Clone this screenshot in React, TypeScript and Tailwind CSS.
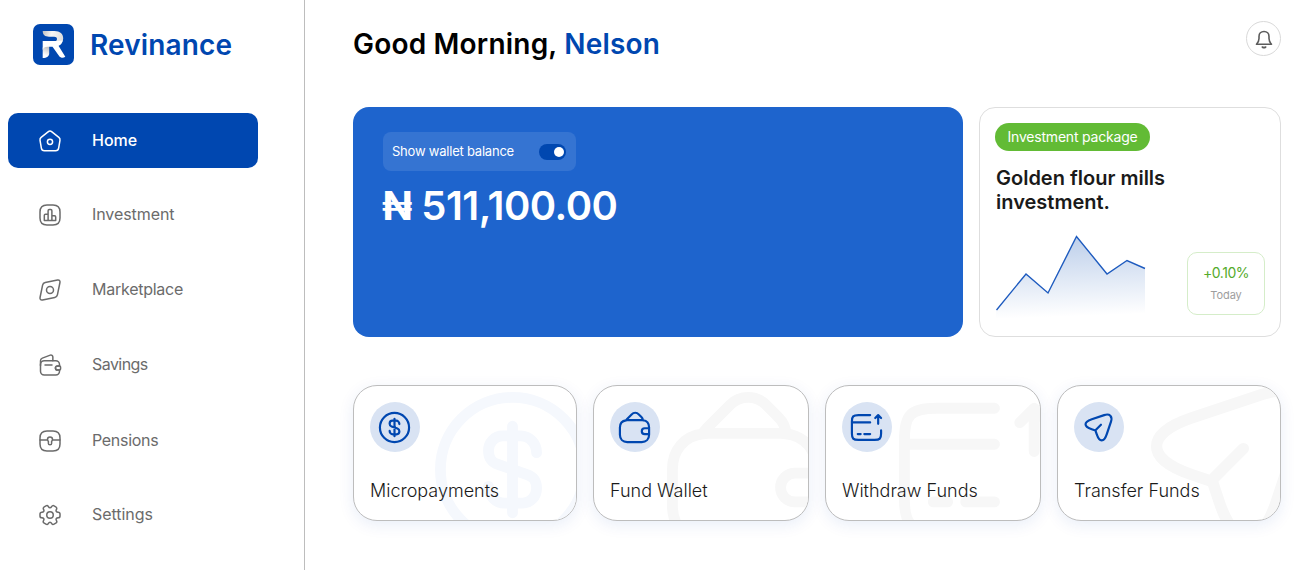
import type { ReactNode } from "react";

type IconProps = { className?: string; strokeWidth?: number; children: ReactNode };

function Icon({ className, strokeWidth = 1.5, children }: IconProps) {
  return (
    <svg
      viewBox="0 0 24 24"
      fill="none"
      stroke="currentColor"
      strokeWidth={strokeWidth}
      strokeLinecap="round"
      strokeLinejoin="round"
      className={className}
    >
      {children}
    </svg>
  );
}

const roundedSquare = <path d="M9 22h6c5 0 7-2 7-7V9c0-5-2-7-7-7H9C4 2 2 4 2 9v6c0 5 2 7 7 7z" />;

const home = (
  <>
    <path d="M10.07 2.82L3.14 8.37c-.78.62-1.28 1.93-1.11 2.91l1.33 7.96c.24 1.42 1.6 2.57 3.04 2.57h11.2c1.43 0 2.8-1.16 3.04-2.57l1.33-7.96c.16-.98-.34-2.29-1.11-2.91l-6.93-5.54c-1.07-.86-2.8-.86-3.86-.01z" />
    <circle cx="12" cy="12.8" r="2.6" />
  </>
);

const chart = (
  <>
    {roundedSquare}
    <path d="M10.11 11.15H7.46c-.63 0-1.14.51-1.14 1.14v5.12h3.79v-6.26zM12.76 6.6h-1.52c-.63 0-1.14.51-1.14 1.14v9.66h3.79V7.74c0-.63-.5-1.14-1.13-1.14zM16.55 12.85H13.9v4.55h3.79v-3.41c0-.63-.51-1.14-1.14-1.14z" />
  </>
);

const discover = (
  <>
    <path d="M7.2 4.6L19.5 2.05c1.8-.35 2.8.65 2.45 2.45L19.4 16.8c-.3 1.4-1.2 2.3-2.6 2.6L4.5 21.95c-1.8.35-2.8-.65-2.45-2.45L4.6 7.2c.3-1.4 1.2-2.3 2.6-2.6z" />
    <circle cx="12" cy="12" r="3.5" />
  </>
);

const savings = (
  <>
    <path d="M18.04 13.55c-.42.41-.66 1-.6 1.63.09 1.08 1.08 1.87 2.16 1.87h1.9v1.19c0 2.07-1.69 3.76-3.76 3.76H6.26c-2.07 0-3.76-1.69-3.76-3.76v-6.73c0-2.07 1.69-3.76 3.76-3.76h11.48c2.07 0 3.76 1.69 3.76 3.76v1.44h-2.02c-.56 0-1.07.22-1.44.6z" />
    <path d="M2.5 12.41V7.84c0-1.19.73-2.25 1.84-2.67l7.94-3a1.9 1.9 0 012.57 1.78v3.8M22.56 13.97v2.06c0 .55-.44 1-1 1.02H19.6c-1.08 0-2.07-.79-2.16-1.87-.06-.63.18-1.22.6-1.63.37-.38.88-.6 1.44-.6h2.08c.56.02 1 .47 1 1.02zM7 12h7" />
  </>
);

const pensions = (
  <>
    {roundedSquare}
    <path d="M2 11h7.5M14.5 11H22M12 8c1.5 0 2.5 1.1 2.5 2.5 0 .8-.4 1.4-.9 1.9v2.1c0 .8-.7 1.3-1.6 1.3s-1.6-.5-1.6-1.3v-2.1c-.5-.5-.9-1.1-.9-1.9C9.5 9.1 10.5 8 12 8z" />
  </>
);

const settings = (
  <>
    <circle cx="12" cy="12" r="3.25" />
    <path d="M2 12.88v-1.76c0-1.04.85-1.9 1.9-1.9 1.81 0 2.55-1.28 1.64-2.85-.52-.9-.21-2.07.7-2.59l1.73-.99c.79-.47 1.81-.19 2.28.6l.11.19c.9 1.57 2.38 1.57 3.29 0l.11-.19c.47-.79 1.49-1.07 2.28-.6l1.73.99c.91.52 1.22 1.69.7 2.59-.91 1.57-.17 2.85 1.64 2.85 1.04 0 1.9.85 1.9 1.9v1.76c0 1.04-.85 1.9-1.9 1.9-1.81 0-2.55 1.28-1.64 2.85.52.91.21 2.07-.7 2.59l-1.73.99c-.79.47-1.81.19-2.28-.6l-.11-.19c-.9-1.57-2.38-1.57-3.29 0l-.11.19c-.47.79-1.49 1.07-2.28.6l-1.73-.99a1.9 1.9 0 01-.7-2.59c.91-1.57.17-2.85-1.64-2.85-1.05 0-1.9-.86-1.9-1.9z" />
  </>
);

const dollar = (
  <>
    <path d="M8.67 14.33c0 1.29.99 2.33 2.22 2.33h2.51c1.07 0 1.94-.91 1.94-2.03 0-1.22-.53-1.65-1.32-1.93l-4.03-1.4c-.79-.28-1.32-.71-1.32-1.93 0-1.12.87-2.03 1.94-2.03h2.51c1.23 0 2.22 1.04 2.22 2.33M12 6v12" />
    <circle cx="12" cy="12" r="10" />
  </>
);

const wallet = (
  <path d="M22 12v5c0 3-2 5-5 5H7c-3 0-5-2-5-5v-5c0-2.72 1.64-4.62 4.19-4.94.26-.04.53-.06.81-.06h10c.26 0 .51.01.75.05C20.33 7.35 22 9.26 22 12zM17.75 7.05c-.24-.04-.49-.05-.75-.05H7c-.28 0-.55.02-.81.06.14-.28.34-.54.58-.78l3.25-3.26a3.525 3.525 0 014.96 0l1.75 1.77c.64.63.98 1.43 1.02 2.26zM22 12.5h-3c-1.1 0-2 .9-2 2s.9 2 2 2h3" />
);

const withdraw = (
  <path d="M2 8.5h12.5M6 16.5h2M10.5 16.5h4M22 14.03v2.08c0 3.51-.89 4.39-4.44 4.39H6.44C2.89 20.5 2 19.62 2 16.11V7.89c0-3.51.89-4.39 4.44-4.39h8.06M20 9.5v-6l2 2M20 3.5l-2 2" />
);

const send = (
  <path d="M7.4 6.32l8.49-2.83c3.81-1.27 5.88.81 4.62 4.62l-2.83 8.49c-1.9 5.71-5.02 5.71-6.92 0l-.84-2.52-2.52-.84c-5.71-1.9-5.71-5.01 0-6.92zM10.11 13.65l3.58-3.59" />
);

function Logo() {
  return (
    <svg viewBox="0 0 41 41" className="size-[41px]">
      <defs>
        <linearGradient id="logo-top" x1="0" x2="1" y1="0" y2="0.2">
          <stop offset="0" stopColor="#c0c0c0" />
          <stop offset="0.45" stopColor="#f6f6f6" />
          <stop offset="1" stopColor="#dedede" />
        </linearGradient>
        <linearGradient id="logo-stem" x1="0.2" x2="0" y1="0" y2="1">
          <stop offset="0" stopColor="#b4b4b4" />
          <stop offset="0.75" stopColor="#ffffff" />
        </linearGradient>
      </defs>
      <rect width="41" height="41" rx="7" fill="#0047b0" />
      <path d="M9.7 7H21.5C27 7 30.2 10 30.2 14.2C30.2 18 28.500 20.500 25 21.800L20.500 18C23 17.800 24 16.500 24 15C24 13.400 22.800 12.700 21.200 12.700H16C12 12.700 9.700 10.800 9.700 7Z" fill="url(#logo-top)" />
      <path d="M9.700 23.500L16.200 19V29.500C16.200 32 14 34 9.700 34Z" fill="url(#logo-stem)" />
      <path d="M9.700 26V17H22.500L29.700 16.500C29 19.200 27.700 20.800 25.500 21.800L32.300 32.700C30.500 34.200 27.700 34 26.300 32.200L19.500 22.800H14.500C12 22.800 10.300 23.800 9.700 26Z" fill="#fff" />
    </svg>
  );
}

const navItems = [
  { label: "Home", icon: home, style: "rounded-[10px] bg-[#0047b0] font-medium text-white" },
  { label: "Investment", icon: chart, style: "-mt-px text-[#6b6b6b] tracking-[-0.08px]" },
  { label: "Marketplace", icon: discover, style: "text-[#6b6b6b] tracking-[-0.25px]" },
  { label: "Savings", icon: savings, style: "text-[#6b6b6b] tracking-[-0.55px]" },
  { label: "Pensions", icon: pensions, style: "mt-px text-[#6b6b6b] tracking-[-0.3px]" },
  { label: "Settings", icon: settings, style: "-mt-px text-[#6b6b6b] tracking-[-0.05px]" },
];

function Sidebar() {
  return (
    <aside className="flex h-full w-[305px] shrink-0 flex-col border-r border-[#bdbdbd]">
      <div className="flex items-center gap-4 pt-6 pl-[33px]">
        <Logo />
        <span className="pt-0.5 text-[28px] leading-[39px] font-semibold tracking-[0.15px] text-[#0047b0]">Revinance</span>
      </div>
      <nav className="mt-12 ml-2 flex w-[250px] flex-col gap-5">
        {navItems.map((item) => (
          <a key={item.label} className={`flex h-[55px] items-center gap-[30px] pl-[30px] text-[16px] ${item.style}`}>
            <Icon className="size-6">{item.icon}</Icon>
            <span className="pb-px">{item.label}</span>
          </a>
        ))}
      </nav>
    </aside>
  );
}

function WalletCard() {
  return (
    <section className="flex h-[230px] w-[610px] flex-col items-start rounded-2xl bg-[#1e64cd] pt-[25px] pl-[30px] text-white">
      <div className="flex h-[39px] w-[193px] items-center justify-between rounded-lg bg-white/10 pr-2.5 pl-[9px]">
        <span className="text-[13px] tracking-[-0.22px]">Show wallet balance</span>
        <span className="flex h-4 w-[27px] items-center justify-end rounded-full bg-[#0047b0] pr-[2px]">
          <span className="size-2.5 rounded-full bg-white" />
        </span>
      </div>
      <p className="mt-[9px] -ml-px flex gap-[9px] text-[40px] leading-[52px] font-semibold">
        <span className="font-bold">₦</span>
        <span className="tracking-[-0.5px]">511,100.00</span>
      </p>
    </section>
  );
}

function TrendChart() {
  return (
    <svg viewBox="0 0 150 92" className="h-[92px] w-[150px]">
      <defs>
        <linearGradient id="trend" x1="0" x2="0.06" y1="0" y2="1">
          <stop offset="0" stopColor="#0047b0" stopOpacity="0.27" />
          <stop offset="0.93" stopColor="#0047b0" stopOpacity="0" />
        </linearGradient>
      </defs>
      <path d="M0 75L30 39L52 58L80.500 1.500L111 39L131 25.500L149 33.500V78L0 90Z" fill="url(#trend)" />
      <path d="M0.500 75L30 39L52 58L80.500 1.500L111 39L131 25.500L149 33.500" fill="none" stroke="#1e5bbf" strokeWidth="1.4" />
    </svg>
  );
}

function PackageCard() {
  return (
    <section className="flex h-[230px] w-[302px] flex-col items-start rounded-2xl border border-[#dedede] pt-[15px] pl-[15px]">
      <span className="flex h-7 w-[155px] items-center justify-center rounded-full bg-[#62bb35] pb-px text-[14px] tracking-[-0.2px] text-white">
        Investment package
      </span>
      <h2 className="mt-[15px] ml-px text-[20px] leading-6 font-semibold text-[#1a1a1a]">
        Golden flour mills
        <br />
        investment.
      </h2>
      <div className="mt-[21px] ml-px flex items-start gap-[41px]">
        <TrendChart />
        <div className="mt-[17px] flex h-[63px] w-[78px] flex-col items-center rounded-[10px] border border-[#d5edc9] pt-[11px]">
          <span className="text-[14px] leading-[18px] tracking-[-0.45px] text-[#55ab2b]">+0.10%</span>
          <span className="mt-[5px] text-[11px] leading-4 tracking-[-0.1px] text-[#9e9e9e]">Today</span>
        </div>
      </div>
    </section>
  );
}

const actions = [
  { label: "Micropayments", icon: dollar, width: "w-[224px]", mark: "-top-[3px] -right-[23px] size-[173px] text-[#f5f8fd]", stroke: 1.5 },
  { label: "Fund Wallet", icon: wallet, width: "w-[216px]", mark: "-top-[3px] -right-[23px] size-[173px] text-[#f7f7f7]", stroke: 1.5 },
  { label: "Withdraw Funds", icon: withdraw, width: "w-[216px]", mark: "-top-[3px] -right-[23px] size-[173px] text-[#f7f7f7]", stroke: 1.5 },
  { label: "Transfer Funds", icon: send, width: "w-[224px]", mark: "-top-[20px] -right-[48px] size-[197px] text-[#f7f7f7]", stroke: 1.38 },
];

function Actions() {
  return (
    <section className="mt-12 flex gap-4">
      {actions.map((a) => (
        <button
          key={a.label}
          className={`${a.width} relative flex h-[136px] flex-col items-start overflow-hidden rounded-[24px] border border-[#bdbdbd] bg-white pt-4 pl-4 shadow-[0_4px_16px_rgba(0,71,176,0.09)]`}
        >
          <Icon className={`absolute ${a.mark}`} strokeWidth={a.stroke}>
            {a.icon}
          </Icon>
          <span className="relative flex size-[50px] rounded-full bg-[#d9e3f3] pt-2 pl-[7px] text-[#0047b0]">
            <Icon className="size-[35px]">{a.icon}</Icon>
          </span>
          <span className="relative mt-[27px] text-[18px] leading-6 font-light text-[#1a1a1a]">{a.label}</span>
        </button>
      ))}
    </section>
  );
}

function BellButton() {
  return (
    <button className="mt-[21px] flex size-[35px] items-center justify-center rounded-full border border-[#d9d9d9]">
      <svg viewBox="0 0 18 20" className="h-5 w-[18px]" fill="none" stroke="#5c5c5c" strokeWidth="1.6" strokeLinecap="round" strokeLinejoin="round">
        <path d="M1.5 15.200H16.500C15 13.700 14 12 14 9.500V7.500C14 4.300 12 2.500 9 2.500S4 4.300 4 7.500V9.500C4 12 3 13.700 1.500 15.200Z" />
        <path d="M7.300 18C8.200 18.700 9.800 18.700 10.700 18" />
      </svg>
    </button>
  );
}

export default function App() {
  return (
    <div className="flex h-[570px] w-[1305px] overflow-hidden bg-white font-['Inter',sans-serif]">
      <Sidebar />
      <main className="flex flex-col pl-12">
        <header className="flex h-[107px] items-start justify-between">
          <h1 className="mt-6 text-[28px] leading-10 font-semibold tracking-[0.2px] text-black">
            Good Morning, <span className="text-[#0047b0]">Nelson</span>
          </h1>
          <BellButton />
        </header>
        <div className="flex gap-4">
          <WalletCard />
          <PackageCard />
        </div>
        <Actions />
      </main>
    </div>
  );
}
